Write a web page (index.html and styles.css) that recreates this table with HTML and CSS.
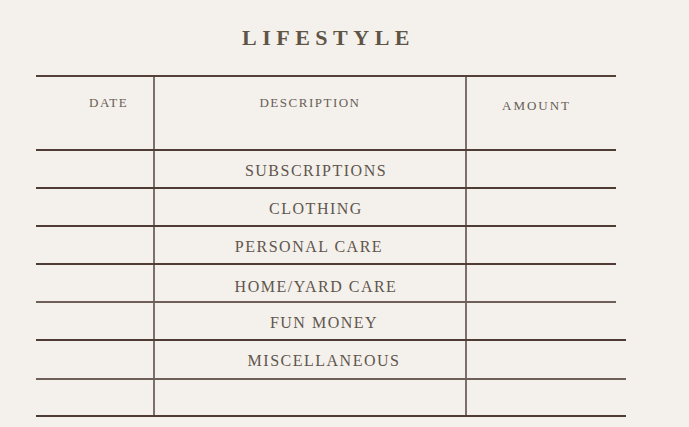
FILE: index.html
```html
<!DOCTYPE html>
<html lang="en">
<head>
<meta charset="utf-8">
<title>Lifestyle</title>
<link rel="stylesheet" href="styles.css">
</head>
<body>
<main class="sheet">
  <h1 class="title">LIFESTYLE</h1>
  <div class="ledger">
    <div class="row row--head">
      <div class="cell head head--date">DATE</div>
      <div class="cell head head--desc">DESCRIPTION</div>
      <div class="cell head head--amount">AMOUNT</div>
    </div>
    <div class="row">
      <div class="cell"></div>
      <div class="cell desc">SUBSCRIPTIONS</div>
      <div class="cell"></div>
    </div>
    <div class="row">
      <div class="cell"></div>
      <div class="cell desc">CLOTHING</div>
      <div class="cell"></div>
    </div>
    <div class="row">
      <div class="cell"></div>
      <div class="cell desc desc--left">PERSONAL CARE</div>
      <div class="cell"></div>
    </div>
    <div class="row row--soft">
      <div class="cell"></div>
      <div class="cell desc desc--low">HOME/YARD CARE</div>
      <div class="cell"></div>
    </div>
    <div class="row row--wide">
      <div class="cell"></div>
      <div class="cell desc desc--right">FUN MONEY</div>
      <div class="cell"></div>
    </div>
    <div class="row row--wide row--soft row--tall">
      <div class="cell"></div>
      <div class="cell desc desc--right">MISCELLANEOUS</div>
      <div class="cell"></div>
    </div>
    <div class="row row--wide row--short">
      <div class="cell"></div>
      <div class="cell"></div>
      <div class="cell"></div>
    </div>
  </div>
</main>
</body>
</html>
```

FILE: styles.css
```css
html, body {
  margin: 0;
  padding: 0;
}

body {
  background: #f4f0ec;
  color: #5f564c;
  font-family: "Liberation Serif", "Times New Roman", serif;
  width: 689px;
  height: 427px;
  overflow: hidden;
}

.sheet {
  display: flex;
  flex-direction: column;
  padding: 0 0 0 36px;
}

.title {
  width: 580px;
  margin: 0;
  padding-top: 27px;
  height: 75px;
  box-sizing: border-box;
  text-align: center;
  font-size: 22px;
  line-height: 22px;
  font-weight: bold;
  letter-spacing: 5.5px;
  text-indent: 5px;
  color: #5f5547;
}

.ledger {
  display: flex;
  flex-direction: column;
}

.row {
  display: grid;
  grid-template-columns: 117px 312px 1fr;
  width: 580px;
  height: 38px;
  box-sizing: border-box;
  border-bottom: 2px solid #4f3c34;
}

.row--soft {
  border-bottom-color: #6e5f58;
}

.row--wide {
  width: 590px;
}

.row--tall {
  height: 39px;
}

.row--short {
  height: 37px;
}

.row--head {
  height: 76px;
  border-top: 2px solid #54413a;
}

.cell {
  display: flex;
  align-items: center;
  justify-content: center;
  min-width: 0;
}

.cell + .cell {
  border-left: 2px solid #7d706a;
}

.head {
  align-items: flex-start;
  font-size: 13px;
  line-height: 13px;
  letter-spacing: 1.5px;
  color: #675e55;
}

.head--date {
  justify-content: flex-start;
  padding: 19px 0 0 53px;
}

.head--desc {
  padding-top: 19px;
}

.head--amount {
  justify-content: flex-start;
  padding: 22px 0 0 35px;
  letter-spacing: 2px;
}

.desc {
  font-size: 16px;
  line-height: 16px;
  letter-spacing: 1.5px;
  padding: 3px 0 0 12px;
}

.desc--left {
  padding-left: 0;
  padding-right: 2px;
}

.desc--right {
  padding-left: 28px;
}

.desc--low {
  padding-top: 8px;
}
```
